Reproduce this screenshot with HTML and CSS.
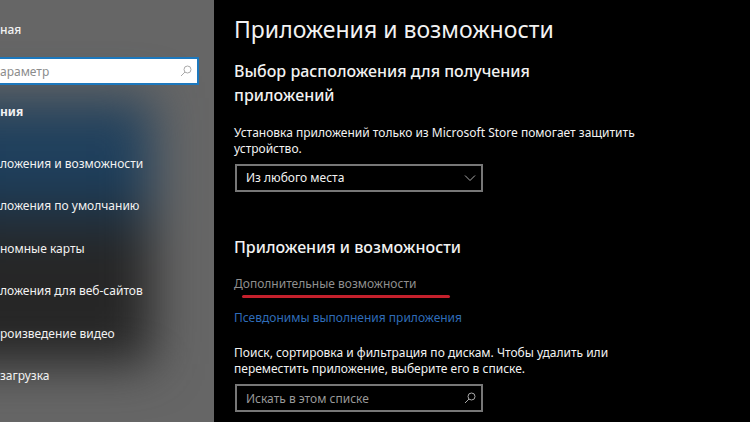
FILE: index.html
```html
<!DOCTYPE html>
<html lang="ru">
<head>
  <meta charset="UTF-8">
  <title>Приложения и возможности</title>
  <link rel="stylesheet" href="styles.css">
</head>
<body>
  <aside class="sidebar">
    <a class="home" href="#">ная</a>
    <div class="search">
      <input type="text" placeholder="араметр" aria-label="Найти параметр">
      <svg class="icon" viewBox="0 0 12 12"><circle cx="7.5" cy="4.5" r="3.5"/><path d="M5 7L1 11"/></svg>
    </div>
    <h3>ния</h3>
    <nav>
      <a href="#">ложения и возможности</a>
      <a href="#">ложения по умолчанию</a>
      <a href="#">номные карты</a>
      <a href="#">ложения для веб-сайтов</a>
      <a href="#">роизведение видео</a>
      <a href="#">загрузка</a>
    </nav>
  </aside>

  <main>
    <h1>Приложения и возможности</h1>

    <section class="source">
      <h2>Выбор расположения для получения приложений</h2>
      <label for="source">Установка приложений только из Microsoft Store помогает защитить устройство.</label>
      <div class="field">
        <select id="source">
          <option>Из любого места</option>
        </select>
        <svg class="icon" viewBox="0 0 12 12"><path d="M1 3.5L6 8.5L11 3.5"/></svg>
      </div>
    </section>

    <section class="apps">
      <h2>Приложения и возможности</h2>
      <a class="link muted" href="#">Дополнительные возможности</a>
      <a class="link" href="#">Псевдонимы выполнения приложения</a>
      <label for="filter">Поиск, сортировка и фильтрация по дискам. Чтобы удалить или переместить приложение, выберите его в списке.</label>
      <div class="field">
        <input id="filter" type="text" placeholder="Искать в этом списке">
        <svg class="icon" viewBox="0 0 12 12"><circle cx="7.5" cy="4.5" r="3.5"/><path d="M5 7L1 11"/></svg>
      </div>
    </section>
  </main>
</body>
</html>
```
FILE: styles.css
```css
* {
  box-sizing: border-box;
}
body {
  margin: 0;
  min-height: 100vh;
  display: flex;
  background: #000;
  color: #f2f2f2;
  font-family: "Noto Sans", "Open Sans", sans-serif;
  font-size: 12px;
  line-height: 16px;
}
a {
  color: inherit;
  text-decoration: none;
}
h1, h2, h3 {
  margin: 0;
}
input, select {
  font: inherit;
  color: inherit;
  outline: none;
  border-radius: 0;
  appearance: none;
}
.icon {
  position: absolute;
  right: 7px;
  top: 50%;
  width: 12px;
  height: 12px;
  margin-top: -6px;
  fill: none;
  stroke: #aaa;
  pointer-events: none;
}

/* sidebar */
.sidebar {
  flex: 0 0 214px;
  display: flex;
  flex-direction: column;
  position: relative;
  isolation: isolate;
  overflow: hidden;
  padding: 22px 0 38px;
  background: #666;
}
/* blurred wallpaper behind the menu */
.sidebar::before {
  content: "";
  position: absolute;
  z-index: -1;
  left: -60px;
  right: 62px;
  top: 98px;
  bottom: 58px;
  background: linear-gradient(#27435c, #1c3f5e 30%, #20364a 40%, #262626 56%);
  filter: blur(24px);
}
.home {
  font-weight: 500;
}
.search {
  position: relative;
  margin: 19px 15px 0 0;
}
.search input {
  display: block;
  width: 100%;
  height: 28px;
  padding: 0 24px 0 0;
  border: 2px solid #1d78bd;
  border-left: 0;
  background: #fff;
}
.search input::placeholder {
  color: #8c8c8c;
}
.sidebar h3 {
  margin-top: 19px;
  font-size: 12px;
  line-height: 16px;
}
nav {
  flex: 1;
  display: flex;
  flex-direction: column;
  justify-content: space-between;
  margin-top: 36px;
}

/* content */
main {
  flex: 1;
  padding: 14px 20px 10px;
}
h1 {
  font-size: 23px;
  line-height: 30px;
  font-weight: 400;
}
h2 {
  font-size: 16px;
  line-height: 24px;
  font-weight: 500;
  max-width: 320px;
}
.source {
  margin-top: 15px;
}
.source label {
  margin-top: 18px;
}
label {
  display: block;
  max-width: 410px;
}
.field {
  position: relative;
  max-width: 248px;
  margin: 7px 0 0 1px;
}
.field input, .field select {
  display: block;
  width: 100%;
  height: 28px;
  padding: 0 26px 0 9px;
  border: 2px solid #777;
  background: #000;
}
.field input::placeholder {
  color: #999;
}
.apps {
  margin-top: 43px;
}
.link {
  display: table;
  margin-top: 18px;
  color: #2f6cb8;
}
.muted {
  position: relative;
  margin-top: 17px;
  color: #8f8f8f;
}
.muted::after {
  content: "";
  position: absolute;
  left: 8px;
  right: -34px;
  bottom: -6px;
  height: 3px;
  border-radius: 2px;
  background: #c4202c;
}
.apps label {
  margin-top: 19px;
}
```
